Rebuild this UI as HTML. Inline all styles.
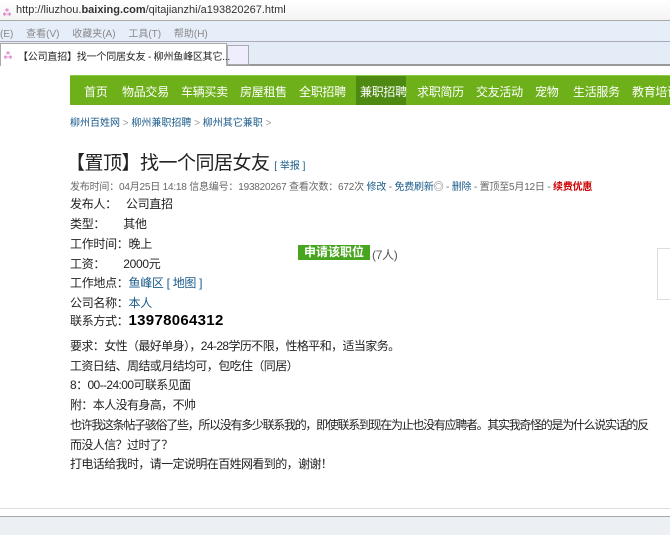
<!DOCTYPE html>
<html><head><meta charset="utf-8"><style>
body{margin:0;width:670px;height:534px;overflow:hidden;background:#fff;font-family:"Liberation Sans","Noto Sans CJK SC",sans-serif;position:relative;font-size:12px;color:#333}
.a{position:absolute;white-space:nowrap}
.addr{left:0;top:0;width:670px;height:20px;background:linear-gradient(#fff,#f4f4f4);border-bottom:1px solid #aaa}
.menu{left:0;top:21px;width:670px;height:20px;background:#e6eefa;border-bottom:1px solid #aab}
.tabs{left:0;top:42px;width:670px;height:22px;background:#e4ecf8;border-bottom:2px solid #999}
.tab{left:0;top:43px;width:225px;height:22px;background:#fff;border:1px solid #aaa;border-bottom:none}
.nav{left:70px;top:75px;width:600px;height:29px;background:#6eb01a;border-top:1px solid #8c4}
.nav span{position:absolute;top:7px;color:#fff;font-size:12px;letter-spacing:-0.3px}
.bl{color:#1a5a8a}
.r{font-size:12px;color:#222;letter-spacing:-0.3px}
</style></head><body>
<div class="a addr"></div>
<div class="a" style="left:2px;top:4px;color:#c4a;font-size:10px">⁂</div>
<div class="a" style="left:16px;top:4px;font-size:11px;color:#333">http://liuzhou.<b>baixing.com</b>/qitajianzhi/a193820267.html</div>
<div class="a menu"></div>
<div class="a" style="left:0;top:25px;font-size:10px;color:#888;word-spacing:10px">(E) 查看(V) 收藏夹(A) 工具(T) 帮助(H)</div>
<div class="a tabs"></div>
<div class="a tab"></div>
<div class="a" style="left:227px;top:45px;width:20px;height:18px;border:1px solid #aaa;background:#eef"></div>
<div class="a" style="left:3px;top:47px;color:#c4a;font-size:10px">⁂</div>
<div class="a" style="left:18px;top:48px;font-size:10px;color:#222;letter-spacing:-0.2px">【公司直招】找一个同居女友 - 柳州鱼峰区其它...</div>
<div class="a nav">
<span style="left:14px">首页</span><span style="left:52px">物品交易</span><span style="left:111px">车辆买卖</span><span style="left:170px">房屋租售</span><span style="left:229px">全职招聘</span>
<div style="position:absolute;left:286px;top:0;width:50px;height:29px;background:#4e8a12"></div>
<span style="left:290px">兼职招聘</span><span style="left:347px">求职简历</span><span style="left:406px">交友活动</span><span style="left:465px">宠物</span><span style="left:503px">生活服务</span><span style="left:562px">教育培训</span>
</div>
<div class="a bl" style="left:70px;top:114px;font-size:10px">柳州百姓网 <span style="color:#999">&gt;</span> 柳州兼职招聘 <span style="color:#999">&gt;</span> 柳州其它兼职 <span style="color:#999">&gt;</span></div>
<div class="a" style="left:66px;top:148px;font-size:19px;color:#222;letter-spacing:-0.5px">【置顶】找一个同居女友 <span style="font-size:10px;letter-spacing:0" class="bl">[ 举报 ]</span></div>
<div class="a" style="left:70px;top:178px;font-size:10px;color:#666;letter-spacing:-0.2px">发布时间：04月25日 14:18 信息编号：193820267 查看次数：672次 <span class="bl">修改</span> - <span class="bl">免费刷新</span>◎ - <span class="bl">删除</span> - 置顶至5月12日 - <b style="color:#c00">续费优惠</b></div>
<div class="a r" style="left:70px;top:195px">发布人：&nbsp;&nbsp; 公司直招</div>
<div class="a r" style="left:70px;top:215px">类型：&nbsp;&nbsp;&nbsp;&nbsp;&nbsp; 其他</div>
<div class="a r" style="left:70px;top:235px">工作时间：晚上</div>
<div class="a r" style="left:70px;top:255px">工资：&nbsp;&nbsp;&nbsp;&nbsp;&nbsp; 2000元</div>
<div class="a r" style="left:70px;top:274px">工作地点：<span class="bl">鱼峰区 [ 地图 ]</span></div>
<div class="a r" style="left:70px;top:294px">公司名称：<span class="bl">本人</span></div>
<div class="a r" style="left:70px;top:312px">联系方式：<b style="font-size:15px;color:#000;letter-spacing:0.3px">13978064312</b></div>
<div class="a" style="left:298px;top:245px;width:72px;height:15px;background:#48a520;color:#fff;font-weight:bold;font-size:12px;text-align:center;line-height:15px">申请该职位</div>
<div class="a r" style="left:372px;top:246px;color:#555">(7人)</div>
<div class="a r" style="left:70px;top:337px;line-height:19.7px;letter-spacing:-0.6px">要求：女性（最好单身），24-28学历不限，性格平和，适当家务。<br>工资日结、周结或月结均可，包吃住（同居）<br>8：00--24:00可联系见面<br>附：本人没有身高，不帅<br><span style="letter-spacing:-1.3px">也许我这条帖子骇俗了些，所以没有多少联系我的，即使联系到现在为止也没有应聘者。其实我奇怪的是为什么说实话的反</span><br>而没人信？过时了？<br>打电话给我时，请一定说明在百姓网看到的，谢谢！</div>
<div class="a" style="left:657px;top:248px;width:13px;height:50px;border:1px solid #ddd;border-right:none"></div>
<div class="a" style="left:0;top:508px;width:670px;height:1px;background:#ddd"></div>
<div class="a" style="left:0;top:516px;width:670px;height:18px;background:#eceff3;border-top:1px solid #aaa"></div>
</body></html>
